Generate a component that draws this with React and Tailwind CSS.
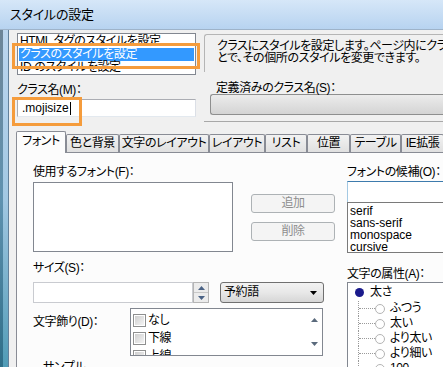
const tabs = [
  { label: '色と背景', w: 'w-[53px]' },
  { label: '文字のレイアウト', w: 'w-[90px]' },
  { label: 'レイアウト', w: 'w-[56px]' },
  { label: 'リスト', w: 'w-[42px]' },
  { label: '位置', w: 'w-[43px]' },
  { label: 'テーブル', w: 'w-[51px]' },
  { label: 'IE拡張', w: 'w-[43px]' },
];

function Arrow({ up, className }) {
  return (
    <svg width="7" height="4" viewBox="0 0 7 4" className={className}>
      {up ? <path d="M0 4 L3.5 0 L7 4 Z" fill="currentColor" /> : <path d="M0 0 L3.5 4 L7 0 Z" fill="currentColor" />}
    </svg>
  );
}

function Check({ label }) {
  return (
    <div className="flex items-center h-[18px] shrink-0">
      <div className="w-[13px] h-[13px] border border-[#8e8f8f] bg-white p-px">
        <div className="w-full h-full bg-gradient-to-br from-[#cfcfcf] to-[#f4f4f4]" />
      </div>
      <span className="ml-[2px]">{label}</span>
    </div>
  );
}

function TreeChild({ label }) {
  return (
    <div className="flex items-center h-[15px] shrink-0">
      <div className="ml-[10px] w-[17px] h-full border-l border-dotted border-[#9a9a9a] flex items-center">
        <div className="w-full border-t border-dotted border-[#9a9a9a]" />
      </div>
      <div className="w-[10px] h-[10px] rounded-full border border-[#b4b4b4] bg-white" />
      <span className="ml-[5px]">{label}</span>
    </div>
  );
}

export default function App() {
  return (
    <div className="relative w-[443px] h-[367px] overflow-hidden bg-[#f0f0f0] text-[12px] leading-[13px] tracking-[-0.4px] text-black font-['Liberation_Sans','Noto_Sans_CJK_JP',sans-serif] [font-feature-settings:'palt']">
      {/* title bar */}
      <div className="h-[29px] flex items-center pl-[10px] bg-gradient-to-b from-[#d6e7f8] to-[#b7d3f0] text-[13px] tracking-[-0.2px]">
        スタイルの設定
      </div>
      <div className="h-px bg-[#9eb3c9]" />

      <div className="flex h-[337px]">
        {/* window frame */}
        <div className="flex w-[9px] shrink-0">
          <div className="w-[3px] bg-gradient-to-b from-[#6d8597] via-[#5f92b0] to-[#2e6e88]" />
          <div className="w-[5px] bg-gradient-to-b from-[#bcd6ee] via-[#a2c8e3] to-[#4f9bb6]" />
          <div className="w-px bg-[#62809a]" />
        </div>

        {/* client */}
        <div className="flex-1 flex flex-col min-w-0">
          {/* top section */}
          <div className="h-[101px] flex pl-[8px] shrink-0">
            <div className="w-[179px] shrink-0 pt-[3px]">
              <div className="h-[42px] border border-[#828790] bg-white overflow-hidden whitespace-nowrap">
                <div className="h-[14px] pl-[2px] leading-[13px] pt-px">HTML タグのスタイルを設定</div>
                <div className="h-[13px] mx-px pl-px bg-[#3399ff] text-white leading-[13px]">クラスのスタイルを設定</div>
                <div className="h-[13px] pl-[2px] leading-[13px]">ID のスタイルを設定</div>
              </div>
              <div className="mt-[9px]">クラス名(M)：</div>
              <div className="mt-[2px] h-[18px] border border-[#abadb3] border-b-[#e3e9ef] border-r-[#dbdfe6] bg-white flex items-center pl-[4px]">
                <span className="font-['Liberation_Sans',sans-serif] tracking-normal">.mojisize</span>
                <div className="w-px h-[13px] bg-black ml-px" />
              </div>
            </div>

            <div className="ml-[8px] flex-1 min-w-0 overflow-hidden">
              <div className="mt-[4px] h-[38px] border-t border-l border-[#b5b5b5] rounded-tl-[3px] pl-[12px] pt-[5px] leading-[12px] whitespace-nowrap">
                <div>クラスにスタイルを設定します。ページ内にクラスを指定するこ</div>
                <div>とで、その個所のスタイルを変更できます。</div>
              </div>
              <div className="mt-[10px] pl-[12px] whitespace-nowrap">定義済みのクラス名(S)：</div>
              <div className="ml-[6px] mt-[-1px] h-[21px] border border-r-0 border-[#8e8f8f] rounded-l-[3px] bg-gradient-to-b from-[#ececec] to-[#d4d4d4]" />
              <div className="mt-[6px] h-px bg-[#a8a8a8]" />
            </div>
          </div>

          {/* tabs */}
          <div className="h-[21px] flex items-end pl-[7px] shrink-0 whitespace-nowrap">
            <div className="relative z-10 w-[50px] shrink-0 h-[22px] mb-[-1px] border border-b-0 border-[#898c95] rounded-t-[2px] bg-[#fcfcfc] flex items-center justify-center pb-[2px]">
              フォント
            </div>
            {tabs.map((t) => (
              <div
                key={t.label}
                className={`${t.w} shrink-0 h-[18px] border border-b-0 border-[#898c95] rounded-t-[2px] bg-gradient-to-b from-[#f2f2f2] to-[#e0e0e0] flex items-center justify-center`}
              >
                {t.label}
              </div>
            ))}
          </div>

          {/* tab page */}
          <div className="flex-1 min-h-0 ml-[7px] border-t border-l border-[#898c95] bg-[#fcfcfc] flex pl-[16px] pt-[13px] overflow-hidden">
            <div className="w-[302px] shrink-0 flex flex-col">
              <div className="flex shrink-0">
                <div className="w-[200px]">
                  <div>使用するフォント(F)：</div>
                  <div className="mt-[3px] h-[70px] border border-[#828790] bg-white" />
                </div>
                <div className="ml-[18px] pt-[28px] flex flex-col">
                  <div className="w-[84px] h-[19px] border border-[#adb2b5] rounded-[3px] bg-[#f4f4f4] text-[#8d8d8d] flex items-center justify-center">追加</div>
                  <div className="mt-[9px] w-[84px] h-[19px] border border-[#adb2b5] rounded-[3px] bg-[#f4f4f4] text-[#8d8d8d] flex items-center justify-center">削除</div>
                </div>
              </div>

              <div className="mt-[10px] shrink-0">サイズ(S)：</div>
              <div className="mt-[7px] flex h-[21px] shrink-0">
                <div className="w-[160px] border border-[#c9cbd0] bg-white" />
                <div className="w-[16px] flex flex-col border border-[#b5b5b5] bg-[#ececec]">
                  <div className="flex-1 flex items-center justify-center border-b border-[#c8c8c8] text-[#4a6285]"><Arrow up /></div>
                  <div className="flex-1 flex items-center justify-center text-[#4a6285]"><Arrow /></div>
                </div>
                <div className="ml-[11px] w-[104px] border border-[#707070] rounded-[3px] bg-gradient-to-b from-[#f2f2f2] via-[#e8e8e8] to-[#d6d6d6] flex items-center justify-between pl-[3px] pr-[6px]">
                  <span>予約語</span>
                  <Arrow className="text-black" />
                </div>
              </div>

              <div className="mt-[5px] flex shrink-0">
                <div className="w-[97px] pt-[8px] whitespace-nowrap">文字飾り(D)：</div>
                <div className="w-[193px] h-[48px] border border-[#828790] bg-white overflow-hidden flex">
                  <div className="flex-1 pl-[2px] pt-[2px] flex flex-col">
                    <Check label="なし" />
                    <Check label="下線" />
                    <Check label="上線" />
                  </div>
                  <div className="w-[16px] flex flex-col items-center justify-between py-[9px] text-[#5a6a7c]">
                    <Arrow up />
                    <Arrow />
                  </div>
                </div>
              </div>

              <div className="mt-[5px] flex items-center shrink-0">
                <div className="w-[6px] h-px bg-[#d5dfe5]" />
                <span className="ml-[4px]">サンプル</span>
              </div>
            </div>

            <div className="ml-[12px] flex-1 min-w-0 flex flex-col whitespace-nowrap">
              <div className="shrink-0">フォントの候補(O)：</div>
              <div className="shrink-0 mt-[2px] h-[21px] border border-r-0 border-b-0 border-[#a4c9e3] border-t-[#3d7bad] bg-white" />
              <div className="shrink-0 h-[51px] overflow-hidden border border-r-0 border-[#7a7a7a] bg-white pl-[2px] pt-[2px] leading-[12px] tracking-normal font-['Liberation_Sans',sans-serif]">
                <div>serif</div>
                <div>sans-serif</div>
                <div>monospace</div>
                <div>cursive</div>
              </div>
              <div className="shrink-0 mt-[15px]">文字の属性(A)：</div>
              <div className="shrink-0 mt-px h-[100px] border border-r-0 border-b-0 border-[#828790] bg-white flex flex-col">
                <div className="flex items-center h-[18px] shrink-0">
                  <div className="ml-[7px] w-[9px] h-[9px] rounded-full bg-[#1a1a8c]" />
                  <span className="ml-[6px]">太さ</span>
                </div>
                <TreeChild label="ふつう" />
                <TreeChild label="太い" />
                <TreeChild label="より太い" />
                <TreeChild label="より細い" />
                <TreeChild label="100" />
              </div>
            </div>
          </div>
        </div>
      </div>

      {/* highlight marks */}
      <div className="absolute left-[12px] top-[43px] w-[188px] h-[26px] border-[3px] border-[#f59c3c]" />
      <div className="absolute left-[12px] top-[97px] w-[70px] h-[29px] border-[3px] border-[#f59c3c]" />
    </div>
  );
}
